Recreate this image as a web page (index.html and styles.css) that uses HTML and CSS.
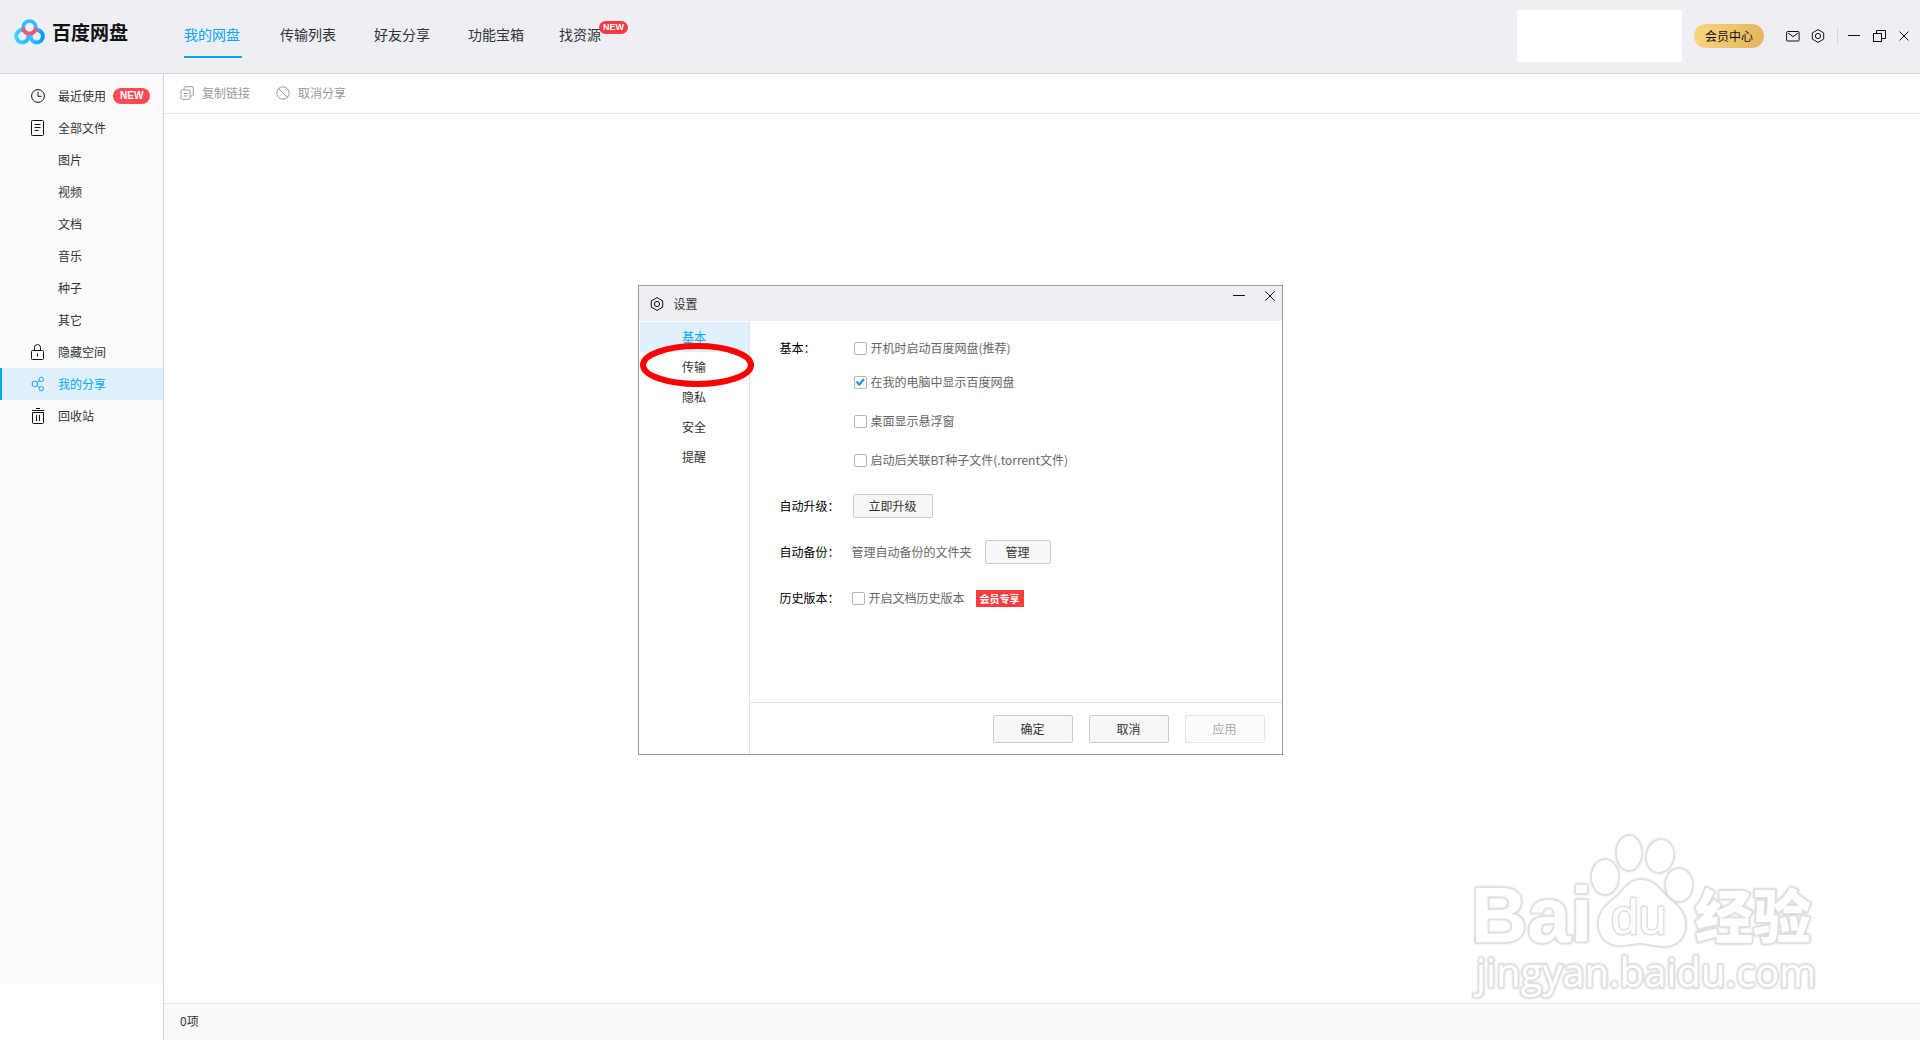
FILE: index.html
```html
<!DOCTYPE html>
<html lang="zh-CN">
<head>
<meta charset="utf-8">
<title>百度网盘</title>
<link rel="stylesheet" href="styles.css">
</head>
<body>
<svg class="defs" aria-hidden="true">
  <symbol id="gear" viewBox="0 0 14 14"><path d="M7 .5 9.200 1.900 12.700 3.900V10.100L9.200 12.100 7 13.500 4.800 12.100 1.300 10.100V3.900L4.800 1.900Z" stroke-linejoin="round"/><circle cx="7" cy="7" r="2.600"/></symbol>
  <symbol id="close" viewBox="0 0 12 12"><path d="M1.500 1.500l9 9M10.500 1.500l-9 9"/></symbol>
  <symbol id="minimize" viewBox="0 0 12 12"><path d="M0 5.500h12"/></symbol>
</svg>
<div class="app">
  <header class="header">
    <div class="brand">
      <svg class="brand-logo" viewBox="0 0 32 26" aria-hidden="true">
        <defs>
          <linearGradient id="lg-left" x1="0" x2="1"><stop offset="0" stop-color="#3fd6ff"/><stop offset="1" stop-color="#27b4fb"/></linearGradient>
          <linearGradient id="lg-right" x1="0" x2="1"><stop offset="0" stop-color="#35c3ff"/><stop offset="1" stop-color="#0a9bfb"/></linearGradient>
        </defs>
        <circle cx="8.300" cy="17.200" r="6.200" fill="none" stroke="url(#lg-left)" stroke-width="4"/>
        <circle cx="22.700" cy="17.200" r="6.200" fill="none" stroke="url(#lg-right)" stroke-width="4"/>
        <circle cx="15.500" cy="8.400" r="6.300" fill="#eeeff5" stroke="#36bbfb" stroke-width="3.800"/>
        <path d="M9.200 8.400a6.300 6.300 0 0 0 12.600 0" fill="none" stroke="#fb5373" stroke-width="3.800"/>
      </svg>
      <span class="brand-name">百度网盘</span>
    </div>
    <nav class="tabs">
      <a class="tab tab-active" href="#">我的网盘</a>
      <a class="tab" href="#">传输列表</a>
      <a class="tab" href="#">好友分享</a>
      <a class="tab" href="#">功能宝箱</a>
      <a class="tab" href="#">找资源<span class="badge tab-badge">NEW</span></a>
    </nav>
    <div class="account"></div>
    <button class="vip" type="button">会员中心</button>
    <div class="tools">
      <button class="icon-btn" type="button" aria-label="消息"><svg class="icon" viewBox="0 0 14 14"><rect x=".6" y="2.500" width="12.500" height="9.500" rx="1"/><path d="M2 4l5 3.600L12 4"/></svg></button>
      <button class="icon-btn" type="button" aria-label="设置"><svg class="icon"><use href="#gear"/></svg></button>
    </div>
    <div class="window-controls">
      <button class="icon-btn" type="button" aria-label="最小化"><svg class="icon icon-small"><use href="#minimize"/></svg></button>
      <button class="icon-btn" type="button" aria-label="还原"><svg class="icon" viewBox="0 0 14 14"><rect x="1.500" y="4.500" width="8" height="8"/><path d="M4.500 4.500v-3h9v8H9.500"/></svg></button>
      <button class="icon-btn" type="button" aria-label="关闭"><svg class="icon icon-small"><use href="#close"/></svg></button>
    </div>
  </header>

  <aside class="sidebar">
    <nav class="side-nav">
      <a class="side-item" href="#"><svg class="side-icon" viewBox="0 0 16 16"><circle cx="8" cy="8" r="6.400"/><path d="M8 3.800V8.300h3.500"/></svg>最近使用<span class="badge">NEW</span></a>
      <a class="side-item" href="#"><svg class="side-icon" viewBox="0 0 16 16"><rect x="1.500" y=".5" width="12" height="15" rx="1"/><path d="M4.500 4.500h6M4.500 7.500h6M4.500 10.500h4"/></svg>全部文件</a>
      <a class="side-item side-sub" href="#">图片</a>
      <a class="side-item side-sub" href="#">视频</a>
      <a class="side-item side-sub" href="#">文档</a>
      <a class="side-item side-sub" href="#">音乐</a>
      <a class="side-item side-sub" href="#">种子</a>
      <a class="side-item side-sub" href="#">其它</a>
      <a class="side-item" href="#"><svg class="side-icon" viewBox="0 0 16 16"><rect x="1.500" y="6.500" width="12" height="9" rx="1"/><path d="M4.500 6.500V3.500a3 3 0 0 1 6 0v3M7.500 9.500v3"/></svg>隐藏空间</a>
      <a class="side-item side-active" href="#"><svg class="side-icon" viewBox="0 0 16 16"><circle cx="4.800" cy="8" r="2.800"/><circle cx="11.300" cy="3.500" r="2.200"/><circle cx="11.300" cy="12.700" r="2.200"/><path d="M7.100 6.300l2.500-1.600M7 9.800l2.500 1.700"/></svg>我的分享</a>
      <a class="side-item" href="#"><svg class="side-icon" viewBox="0 0 16 16"><path d="M2 2.500h12M6 .5h4M2.500 4.500h11v10a1 1 0 0 1-1 1h-9a1 1 0 0 1-1-1zM6.500 7v6M9.500 7v6"/></svg>回收站</a>
    </nav>
  </aside>

  <main class="content">
    <div class="toolbar">
      <button class="tool-btn" type="button"><svg class="icon" viewBox="0 0 14 14"><rect x="1" y="4" width="9" height="9.300" rx="1.500"/><path d="M4 4V2a1.300 1.300 0 0 1 1.300-1.300h6.700A1.300 1.300 0 0 1 13.300 2v6.700A1.300 1.300 0 0 1 12 10h-2M3.500 7.500h4M3.500 10h4"/></svg>复制链接</button>
      <button class="tool-btn" type="button"><svg class="icon" viewBox="0 0 14 14"><circle cx="7" cy="7" r="6.200"/><path d="M2.600 2.600l8.800 8.800"/></svg>取消分享</button>
    </div>
    <div class="file-area"></div>
    <footer class="status">0项</footer>
  </main>
</div>

<svg class="watermark" viewBox="0 0 380 190" role="img" aria-label="Baidu经验">
  <g class="wm-shape">
    <ellipse cx="145" cy="57" rx="13" ry="17"/>
    <ellipse cx="169" cy="33" rx="12" ry="17"/>
    <ellipse cx="200" cy="36" rx="13" ry="16" transform="rotate(12 200 36)"/>
    <ellipse cx="219" cy="65" rx="13" ry="16"/>
    <path d="M181 60c-10 0-15 7-21 14-8 8-21 14-21 30 0 13 9 21 21 21 9 0 14-2 21-2s13 3 23 3c12 0 21-8 21-21 0-15-10-20-18-28-9-9-14-17-26-17z"/>
  </g>
  <text class="wm-latin" x="11" y="122">Bai</text>
  <text class="wm-du" x="151" y="114">du</text>
  <text class="wm-cjk" x="235" y="118">经验</text>
  <text class="wm-url" x="16" y="167">jingyan.baidu.com</text>
</svg>

<div class="overlay">
  <section class="dialog" role="dialog" aria-labelledby="dialog-title">
    <header class="dialog-header">
      <svg class="icon dialog-icon"><use href="#gear"/></svg>
      <h1 class="dialog-title" id="dialog-title">设置</h1>
      <div class="dialog-controls">
        <button class="icon-btn" type="button" aria-label="最小化"><svg class="icon icon-small"><use href="#minimize"/></svg></button>
        <button class="icon-btn" type="button" aria-label="关闭"><svg class="icon icon-small"><use href="#close"/></svg></button>
      </div>
    </header>
    <div class="dialog-body">
      <nav class="dialog-nav">
        <a class="dialog-link dialog-link-active" href="#">基本</a>
        <a class="dialog-link" href="#">传输</a>
        <a class="dialog-link" href="#">隐私</a>
        <a class="dialog-link" href="#">安全</a>
        <a class="dialog-link" href="#">提醒</a>
        <svg class="marker" viewBox="0 0 116 46" aria-hidden="true"><ellipse cx="58" cy="23" rx="54" ry="19"/></svg>
      </nav>
      <form class="settings">
        <div class="fields">
          <div class="field field-top">
            <span class="field-label">基本：</span>
            <div class="options">
              <label class="option"><input class="check" type="checkbox">开机时启动百度网盘(推荐)</label>
              <label class="option"><input class="check" type="checkbox" checked>在我的电脑中显示百度网盘</label>
              <label class="option"><input class="check" type="checkbox">桌面显示悬浮窗</label>
              <label class="option"><input class="check" type="checkbox">启动后关联BT种子文件(.torrent文件)</label>
            </div>
          </div>
          <div class="field">
            <span class="field-label">自动升级：</span>
            <button class="btn" type="button">立即升级</button>
          </div>
          <div class="field">
            <span class="field-label">自动备份：</span>
            <span class="field-text">管理自动备份的文件夹</span>
            <button class="btn btn-narrow" type="button">管理</button>
          </div>
          <div class="field">
            <span class="field-label">历史版本：</span>
            <label class="option"><input class="check" type="checkbox">开启文档历史版本</label>
            <span class="vip-tag">会员专享</span>
          </div>
        </div>
        <div class="actions">
          <button class="btn btn-tall" type="button">确定</button>
          <button class="btn btn-tall" type="button">取消</button>
          <button class="btn btn-tall" type="button" disabled>应用</button>
        </div>
      </form>
    </div>
  </section>
</div>
</body>
</html>
```
FILE: styles.css
```css
*, *::before, *::after { box-sizing: border-box; }

body {
  margin: 0;
  color: #333;
  background: #fff;
  font-family: "Noto Sans CJK SC", sans-serif;
  font-size: 12px;
  line-height: 18px;
}

a { color: inherit; text-decoration: none; }

button {
  margin: 0;
  padding: 0;
  border: 0;
  background: none;
  color: inherit;
  font: inherit;
  cursor: pointer;
}

.defs { display: none; }

.icon {
  display: block;
  flex: none;
  width: 14px;
  height: 14px;
  fill: none;
  stroke: currentColor;
  stroke-width: 1;
}

.icon-small { width: 12px; height: 12px; }

.icon-btn { color: #111; }

.badge {
  padding: 0 7px;
  border-radius: 8px;
  background: #fc4b54;
  color: #fff;
  font: bold 10px/16px "Liberation Sans", sans-serif;
}

/* Page frame */
.app {
  display: grid;
  grid-template: 74px 1fr / 164px 1fr;
  min-height: 100vh;
}

.header {
  grid-column: 1 / -1;
  display: flex;
  align-items: center;
  padding: 0 10px 1px 14px;
  border-bottom: 1px solid #d5d6dc;
  background: #eeeff5;
}

.brand {
  display: flex;
  align-items: center;
  gap: 6px;
  width: 170px;
  padding-bottom: 8px;
}

.brand-logo { width: 32px; height: 26px; }

.brand-name {
  color: #111;
  font-size: 19px;
  font-weight: 700;
  line-height: 26px;
}

.tabs {
  display: grid;
  grid-template-columns: 96px 94px 94px 91px auto;
  justify-items: start;
}

.tab {
  position: relative;
  min-width: 58px;
  height: 44px;
  border-bottom: 2px solid transparent;
  font-size: 14px;
  line-height: 40px;
}

.tab-active { border-color: #06a7ff; color: #06a7ff; }

.tab-badge {
  position: absolute;
  top: 7px;
  left: 40px;
  padding: 0 4px;
  background: #fb3a45;
  font-size: 9px;
  line-height: 13px;
}

.account {
  width: 165px;
  height: 52px;
  margin: 0 12px 0 auto;
  background: #fff;
}

.vip {
  width: 70px;
  height: 24px;
  border-radius: 12px;
  background: linear-gradient(100deg, #f9d581, #e6b35c);
  color: #111;
}

.tools {
  display: flex;
  gap: 11px;
  padding: 0 12px 0 22px;
}

.window-controls {
  display: flex;
  align-items: center;
  gap: 12px;
  height: 16px;
  padding-left: 10px;
  border-left: 1px solid #d5d6dc;
}

/* Sidebar */
.sidebar {
  padding-bottom: 56px;
  border-right: 1px solid #d5d6dc;
  background: #f9fbfd content-box;
}

.side-nav { padding-top: 6px; }

.side-item {
  display: flex;
  align-items: center;
  height: 32px;
  padding-left: 30px;
}

.side-item .badge { margin-left: 7px; }

.side-sub { padding-left: 58px; }

.side-icon {
  width: 16px;
  height: 16px;
  margin-right: 12px;
  fill: none;
  stroke: #111;
  stroke-width: 1;
}

.side-active {
  padding-left: 28px;
  border-left: 2px solid #06a7ff;
  background: #dff1fc;
  color: #06a7ff;
}

.side-active .side-icon { stroke: #06a7ff; }

/* File list */
.content {
  display: grid;
  grid-template-rows: 40px 1fr 37px;
}

.toolbar {
  display: flex;
  gap: 26px;
  padding: 0 16px 2px;
  border-bottom: 1px solid #e9e9eb;
}

.tool-btn {
  display: flex;
  align-items: center;
  gap: 8px;
  color: #999;
}

.status {
  padding: 0 16px;
  border-top: 1px solid #e6e6e8;
  background: #fafafa;
  line-height: 34px;
}

/* Watermark */
.watermark {
  position: absolute;
  right: 80px;
  bottom: 30px;
  width: 380px;
  height: 190px;
  fill: #fff;
  stroke: #e0e0e0;
  stroke-width: 3;
  stroke-linejoin: round;
  paint-order: stroke;
  filter: drop-shadow(0 0 1px #ccc);
}

.wm-latin { font: bold 78px "Liberation Sans", sans-serif; }

.wm-du { font: 50px "Liberation Sans", sans-serif; }

.wm-cjk { font: 900 58px "Noto Sans CJK SC", sans-serif; }

.wm-url { font: 40px "Open Sans", sans-serif; }

/* Settings dialog */
.overlay {
  position: fixed;
  inset: 0;
  display: grid;
  place-items: center;
}

.dialog {
  display: flex;
  flex-direction: column;
  width: 645px;
  min-height: 470px;
  border: 1px solid #999;
  background: #fff;
}

.dialog-header {
  display: flex;
  align-items: center;
  gap: 10px;
  height: 35px;
  padding: 0 6px 0 11px;
  background: #eeeff5;
}

.dialog-icon { stroke: #111; }

.dialog-title {
  margin: 0;
  font-size: 12px;
  font-weight: 400;
}

.dialog-controls {
  display: flex;
  align-self: start;
  gap: 19px;
  margin-left: auto;
  padding-top: 4px;
}

.dialog-body { display: flex; flex: 1; }

.dialog-nav {
  position: relative;
  width: 111px;
  padding: 1px 0 0 1px;
  border-right: 1px solid #e3e3e3;
}

.dialog-link {
  display: block;
  line-height: 30px;
  text-align: center;
}

.dialog-link-active { background: #dff1fc; color: #06a7ff; }

.marker {
  position: absolute;
  top: 21px;
  left: 0;
  width: 116px;
  height: 46px;
  fill: none;
  stroke: #f00;
  stroke-width: 6;
}

.settings {
  display: flex;
  flex: 1;
  flex-direction: column;
}

.fields {
  display: flex;
  flex: 1;
  flex-direction: column;
  gap: 22px;
  padding: 18px 16px 0 30px;
}

.field {
  display: flex;
  align-items: center;
  min-height: 24px;
}

.field-top { align-items: flex-start; }

.field-label { width: 72px; color: #000; }

.field-label + .btn { margin-left: 1px; }

.field-text { margin-right: 13px; color: #666; }

.options {
  display: grid;
  grid-template-rows: 34px 39px 39px 21px;
  align-items: start;
  padding-left: 2px;
}

.option {
  display: flex;
  align-items: center;
  gap: 4px;
  color: #666;
}

.check {
  appearance: none;
  width: 13px;
  height: 13px;
  margin: 0;
  border: 1px solid #b5b5b5;
  border-radius: 2px;
  background: #fff;
}

.check:checked::before {
  content: "";
  display: block;
  width: 11px;
  height: 11px;
  background: #2196f3;
  clip-path: polygon(9% 50%, 24% 38%, 42% 58%, 80% 16%, 94% 30%, 44% 88%);
}

.btn {
  width: 80px;
  height: 24px;
  border: 1px solid #ccc;
  border-radius: 2px;
  background: #f7f7f7;
  color: #333;
}

.btn-narrow { width: 66px; }

.btn-tall { height: 28px; }

.btn:disabled {
  border-color: #e6e6e6;
  background: #fbfbfb;
  color: #aaa;
  cursor: default;
}

.vip-tag {
  margin-left: 11px;
  padding: 0 4px;
  background: #fb3d3d;
  color: #fff;
  font-size: 10px;
  font-weight: 700;
  line-height: 17px;
}

.actions {
  display: flex;
  justify-content: flex-end;
  gap: 16px;
  padding: 12px 17px 11px;
  border-top: 1px solid #e3e3e3;
}
```
